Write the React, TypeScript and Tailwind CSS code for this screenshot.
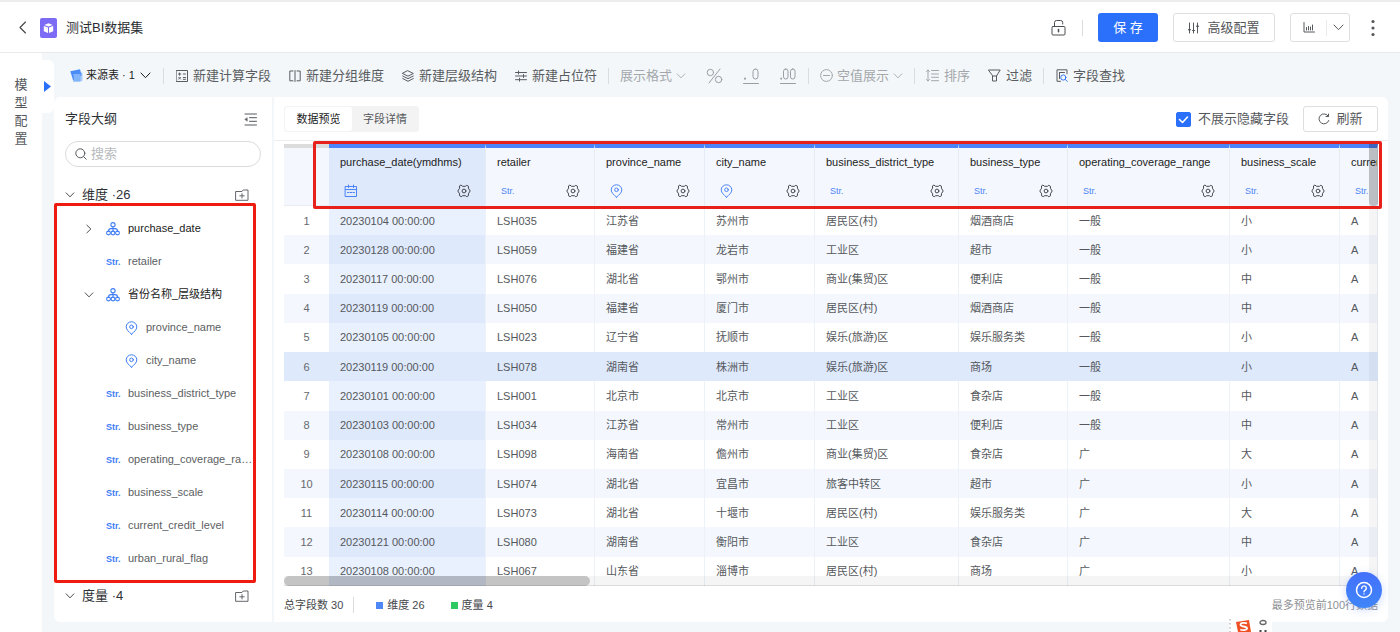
import type { ReactNode } from 'react';

type Kind = 'date' | 'str' | 'geo' | 'tree';

interface Column {
  name: string;
  kind: Kind;
  width: string;
}

interface Field {
  name: string;
  kind: Kind;
  arrow?: 'right' | 'down';
  nested?: boolean;
}

const columns: Column[] = [
  { name: 'purchase_date(ymdhms)', kind: 'date', width: 'w-[157px]' },
  { name: 'retailer', kind: 'str', width: 'w-[109px]' },
  { name: 'province_name', kind: 'geo', width: 'w-[110px]' },
  { name: 'city_name', kind: 'geo', width: 'w-[110px]' },
  { name: 'business_district_type', kind: 'str', width: 'w-[144px]' },
  { name: 'business_type', kind: 'str', width: 'w-[109px]' },
  { name: 'operating_coverage_range', kind: 'str', width: 'w-[162px]' },
  { name: 'business_scale', kind: 'str', width: 'w-[110px]' },
  { name: 'current_credit_level', kind: 'str', width: '' },
];

const rows: string[][] = [
  ['20230104 00:00:00', 'LSH035', '江苏省', '苏州市', '居民区(村)', '烟酒商店', '一般', '小', 'A'],
  ['20230128 00:00:00', 'LSH059', '福建省', '龙岩市', '工业区', '超市', '一般', '小', 'A'],
  ['20230117 00:00:00', 'LSH076', '湖北省', '鄂州市', '商业(集贸)区', '便利店', '一般', '中', 'A'],
  ['20230119 00:00:00', 'LSH050', '福建省', '厦门市', '居民区(村)', '烟酒商店', '一般', '中', 'A'],
  ['20230105 00:00:00', 'LSH023', '辽宁省', '抚顺市', '娱乐(旅游)区', '娱乐服务类', '一般', '小', 'A'],
  ['20230119 00:00:00', 'LSH078', '湖南省', '株洲市', '娱乐(旅游)区', '商场', '一般', '小', 'A'],
  ['20230101 00:00:00', 'LSH001', '北京市', '北京市', '工业区', '食杂店', '一般', '中', 'A'],
  ['20230103 00:00:00', 'LSH034', '江苏省', '常州市', '工业区', '便利店', '一般', '中', 'A'],
  ['20230108 00:00:00', 'LSH098', '海南省', '儋州市', '商业(集贸)区', '食杂店', '广', '大', 'A'],
  ['20230115 00:00:00', 'LSH074', '湖北省', '宜昌市', '旅客中转区', '超市', '广', '小', 'A'],
  ['20230114 00:00:00', 'LSH073', '湖北省', '十堰市', '居民区(村)', '娱乐服务类', '广', '大', 'A'],
  ['20230121 00:00:00', 'LSH080', '湖南省', '衡阳市', '工业区', '食杂店', '广', '中', 'A'],
  ['20230108 00:00:00', 'LSH067', '山东省', '淄博市', '居民区(村)', '商场', '广', '小', 'A'],
];

const fields: Field[] = [
  { name: 'purchase_date', kind: 'tree', arrow: 'right' },
  { name: 'retailer', kind: 'str' },
  { name: '省份名称_层级结构', kind: 'tree', arrow: 'down' },
  { name: 'province_name', kind: 'geo', nested: true },
  { name: 'city_name', kind: 'geo', nested: true },
  { name: 'business_district_type', kind: 'str' },
  { name: 'business_type', kind: 'str' },
  { name: 'operating_coverage_range', kind: 'str' },
  { name: 'business_scale', kind: 'str' },
  { name: 'current_credit_level', kind: 'str' },
  { name: 'urban_rural_flag', kind: 'str' },
];

function Svg({ children, className = 'size-[14px]', box = '0 0 14 14' }: { children: ReactNode; className?: string; box?: string }) {
  return (
    <svg viewBox={box} className={`shrink-0 ${className}`} fill="none" stroke="currentColor" strokeLinecap="round" strokeLinejoin="round" aria-hidden="true">
      {children}
    </svg>
  );
}

function ChevronDown({ className = 'h-[7px] w-[11px]' }: { className?: string }) {
  return (
    <Svg box="0 0 11 7" className={className}>
      <path d="M1 1l4.5 4.7L10 1" />
    </Svg>
  );
}

function KindIcon({ kind, bold = false }: { kind: Kind; bold?: boolean }) {
  if (kind === 'str') {
    return <span className={`w-[14px] shrink-0 text-[9px] leading-4 ${bold ? 'font-bold' : ''}`}>Str.</span>;
  }
  if (kind === 'geo') {
    return (
      <Svg className="h-[14px] w-[13px]" box="0 0 13 14">
        <path d="M6.5 13.2C4 10.9 1.2 8.8 1.2 5.9a5.3 5.1 0 0 1 10.6 0c0 2.9-2.8 5-5.3 7.3z" />
        <circle cx="6.5" cy="5.8" r="1.8" />
      </Svg>
    );
  }
  if (kind === 'date') {
    return (
      <Svg>
        <path d="M1.5 2.5h11v10h-11zM1.5 5.5h11M4.500 1v2.500M9.500 1v2.500" />
        <path d="M3.500 8.500h1.500M6.300 8.500h1.500M9 8.500h1.500" />
      </Svg>
    );
  }
  return (
    <Svg>
      <circle cx="7" cy="2.700" r="2.100" strokeWidth="1.100" />
      <circle cx="2.500" cy="11" r="1.900" strokeWidth="1.100" />
      <circle cx="7" cy="11" r="1.900" strokeWidth="1.100" />
      <circle cx="11.500" cy="11" r="1.900" strokeWidth="1.100" />
      <path d="M7 4.800v4.300M2.500 9.100c0-1.700.9-2.500 2.400-2.500h4.200c1.500 0 2.400.8 2.400 2.500" strokeWidth="1.100" />
    </Svg>
  );
}

function Gear() {
  return (
    <Svg>
      <path d="M4.200 1.300L5.600 2.300h2.800l1.400-1 1.700 1-.1 1.900L13.200 7l-1.800 2.800.1 1.900-1.700 1-1.400-1H5.600l-1.400 1-1.700-1 .1-1.900L.8 7l1.800-2.800-.1-1.900z" />
      <circle cx="7" cy="7" r="1.900" />
    </Svg>
  );
}

function FolderPlus() {
  return (
    <Svg className="h-[12px] w-[14px]" box="0 0 14 12">
      <path d="M1 2.500h6L8.200 1H13v10.300H1zM7 4.600v4.400M4.800 6.800h4.400" />
    </Svg>
  );
}

function Tool({ icon, children, muted = false, className = '' }: { icon?: ReactNode; children?: ReactNode; muted?: boolean; className?: string }) {
  return (
    <button type="button" className={`flex h-6 shrink-0 items-center gap-1 whitespace-nowrap ${muted ? 'text-[#a3a7ab]' : 'text-[#595c60]'} ${className}`}>
      {icon}
      {children}
    </button>
  );
}

function Separator({ className = '' }: { className?: string }) {
  return <span className={`h-4 w-px shrink-0 bg-[#d9dde0] ${className}`} />;
}

function Header() {
  return (
    <header className="flex h-[53px] shrink-0 items-center border-t-2 border-b border-t-[#ededed] border-b-[#e6eaec] bg-white pt-px pr-5 pl-[18px]">
      <button type="button" aria-label="返回" className="text-[#444]">
        <Svg className="h-[13px] w-[9px]" box="0 0 9 13">
          <path d="M7.500 1L2 6.500 7.500 12" strokeWidth="1.100" />
        </Svg>
      </button>
      <svg viewBox="0 0 17 20" className="ml-[13px] h-5 w-[17px]" aria-hidden="true">
        <rect width="17" height="20" rx="2" fill="#7c6cf5" />
        <path d="M8.500 5.200l4.200 1.700-4.200 1.700-4.200-1.700zM3.800 7.900l4.200 1.700v5.500l-4.200-1.800zM13.200 7.900L9 9.600v5.500l4.200-1.800z" fill="#fff" />
      </svg>
      <h1 className="ml-[9px] text-[13px] text-[#2b2d30]">测试BI数据集</h1>
      <div className="ml-auto flex items-center">
        <button type="button" aria-label="锁定" className="text-[#4b4e52]">
          <Svg className="h-[17px] w-[15px]" box="0 0 15 17">
            <rect x="1" y="7.500" width="13" height="8.500" rx="1" />
            <path d="M3.500 7.500V3.500a2 2 0 0 1 2-2h4.200a2 2 0 0 1 2 2V5" />
            <path d="M7.500 10.500v2.300" strokeWidth="1.500" />
          </Svg>
        </button>
        <Separator className="ml-4" />
        <button type="button" className="ml-[15px] h-[29px] w-[60px] rounded-[3px] bg-[#2a70fb] text-[13px] text-white">保 存</button>
        <button type="button" className="ml-[15px] flex h-[29px] w-[102px] items-center justify-center gap-2 rounded-[3px] border border-[#dcdee0] text-[13px] text-[#55585c]">
          <Svg className="h-3 w-[11px]" box="0 0 11 12">
            <path d="M1.500 1v10M5.500 1v10M9.500 1v10M.5 7.500l1 1.500 1-1.500M4.500 8.500h2M8.500 4.500l1-1.500 1 1.500" />
          </Svg>
          高级配置
        </button>
        <div className="ml-[15px] flex h-[29px] w-[60px] items-center rounded-[3px] border border-[#dcdee0] text-[#55585c]">
          <button type="button" aria-label="图表" className="flex flex-1 justify-center">
            <Svg className="h-[11px] w-3" box="0 0 12 11">
              <path d="M1 .5v9.500h10.500M3.500 8V5.500M5.500 8V4.500M7.500 8V5M9.500 8V3" />
            </Svg>
          </button>
          <span className="h-4 w-px bg-[#e8eaec]" />
          <button type="button" aria-label="更多图表" className="flex w-[22px] justify-center"><ChevronDown /></button>
        </div>
        <button type="button" aria-label="更多" className="ml-4 flex w-[14px] justify-center text-[#55585c]">
          <svg viewBox="0 0 4 18" className="h-[18px] w-1" fill="currentColor" aria-hidden="true">
            <circle cx="2" cy="2.500" r="1.600" /><circle cx="2" cy="9" r="1.600" /><circle cx="2" cy="15.500" r="1.600" />
          </svg>
        </button>
      </div>
    </header>
  );
}

function Toolbar() {
  return (
    <div className="flex h-11 shrink-0 items-center overflow-hidden pt-px pl-7 text-[13px]">
      <button type="button" className="flex h-6 shrink-0 items-center text-[11px] text-[#1c1c1c]">
        <svg viewBox="0 0 13 13" className="mr-[3px] size-[13px]" aria-hidden="true">
          <path d="M3 3.500h9.500v8L10 13H3z" fill="#a9cdfb" />
          <path d="M.3 2.300L10 .3l1.600 6L5 11.500 3 11z" fill="#4a8df8" />
          <path d="M3.300 5h7.200v7H4z" fill="#82b4fb" />
        </svg>
        来源表 · 1
        <ChevronDown className="ml-[5px] h-[7px] w-[11px]" />
      </button>
      <Separator className="mx-3" />
      <Tool icon={<Svg className="mr-px size-3" box="0 0 12 12"><rect x=".5" y=".5" width="11" height="11" /><path d="M2.500 4h2.300M3.600 3v2.200M7.300 4h2.200M2.700 7.300l1.800 1.800M4.500 7.300L2.700 9.100M7.300 7.500h2.200M7.300 9.300h2.200" /></Svg>}>新建计算字段</Tool>
      <Tool className="ml-[18px]" icon={<Svg className="mr-px size-3" box="0 0 12 12"><path d="M4 1H.8v9.800H4M8 1h3.200v9.800H8M6 .5v11" /></Svg>}>新建分组维度</Tool>
      <Tool className="ml-[18px]" icon={<Svg className="mr-px size-3" box="0 0 12 12"><path d="M6 .8l5.300 2.700L6 6.200.7 3.500zM.7 6L6 8.700 11.300 6M.7 8.500L6 11.300l5.300-2.800" /></Svg>}>新建层级结构</Tool>
      <Tool className="ml-[18px]" icon={<Svg className="mr-px size-3" box="0 0 12 12"><path d="M.5 2.500h11M.5 6h11M.5 9.700h11M3.500 1v3M8.500 4.500v3M4.500 8.200v3" /></Svg>}>新建占位符</Tool>
      <Separator className="mx-[11px]" />
      <Tool muted>展示格式<ChevronDown className="h-[6px] w-[10px]" /></Tool>
      <button type="button" aria-label="百分比" className="ml-5 shrink-0 text-[#9a9ea2]">
        <Svg className="h-4 w-[17px]" box="0 0 17 16"><circle cx="4.400" cy="4.500" r="3.200" /><circle cx="12.600" cy="11.500" r="3.200" /><path d="M14 1L3 15" /></Svg>
      </button>
      <button type="button" aria-label="减少小数位" className="ml-5 shrink-0 text-[#9a9ea2]">
        <Svg className="h-4 w-4" box="0 0 16 16"><path d="M.5 15.500h15" /><rect x="10" y="1" width="5" height="10" rx="2.500" /><path d="M2 10.500v.3" strokeWidth="2" /></Svg>
      </button>
      <button type="button" aria-label="增加小数位" className="ml-[21px] shrink-0 text-[#9a9ea2]">
        <Svg className="h-4 w-4" box="0 0 16 16"><path d="M.5 15.500h15" /><rect x="3.500" y="1" width="4.500" height="10" rx="2.200" /><rect x="10.500" y="1" width="4.500" height="10" rx="2.200" /><path d="M1.200 10.500v.3" strokeWidth="1.800" /></Svg>
      </button>
      <Separator className="mr-[11px] ml-3" />
      <Tool muted icon={<Svg className="size-[13px]" box="0 0 13 13"><circle cx="6.500" cy="6.500" r="5.900" /><path d="M3.500 6.500h6" /></Svg>}>空值展示<ChevronDown className="h-[6px] w-[10px]" /></Tool>
      <Separator className="mx-[11px]" />
      <Tool muted icon={<Svg className="mr-px size-[13px]" box="0 0 13 13"><path d="M2 1v11M.5 2.500L2 1l1.500 1.500M.5 10.500L2 12l1.500-1.500M5.500 1.500h7M5.500 5h7M5.500 8.300h7M5.500 11.700h7" /></Svg>}>排序</Tool>
      <Tool className="ml-[18px]" icon={<Svg className="mr-px size-[13px]" box="0 0 13 13"><path d="M.8 1h11.400L8.500 7v5h-4V7zM4.500 7h4" /></Svg>}>过滤</Tool>
      <Separator className="mr-3 ml-[11px]" />
      <Tool icon={<Svg className="mr-px h-[13px] w-3" box="0 0 12 13"><path d="M4.500 12.300H1V.8h10v4M3.500 3.500h5M3.500 3.500v6" /><g stroke="#3478f6"><circle cx="7.300" cy="8.500" r="2.600" /><path d="M9.300 10.500l2 2" /></g></Svg>}>字段查找</Tool>
    </div>
  );
}

function SectionTitle({ label, count }: { label: string; count: string }) {
  return (
    <div className="flex h-[34px] items-center pr-[23px] pl-[11px] text-[13px] text-[#2e3135]">
      <ChevronDown className="h-[6px] w-[10px]" />
      <span className="ml-[7px]">{label} ·{count}</span>
      <button type="button" aria-label={`新建${label}文件夹`} className="ml-auto text-[#63666a]"><FolderPlus /></button>
    </div>
  );
}

function Sidebar() {
  return (
    <aside className="w-[218px] shrink-0 overflow-hidden rounded-l-md bg-white">
      <div className="flex h-11 items-center justify-between pr-[15px] pl-[11px]">
        <h2 className="text-[13px] text-[#2e3135]">字段大纲</h2>
        <button type="button" aria-label="收起" className="text-[#55585c]">
          <Svg className="size-[13px]" box="0 0 13 13"><path d="M1 1h11.500M5.500 4.700h7M5.500 8.300h7M1 12h11.500" /><path d="M3.300 4.700v3.600L.8 6.500z" fill="currentColor" strokeWidth=".3" /></Svg>
        </button>
      </div>
      <label className="mr-[11px] ml-[11px] flex h-[26px] items-center gap-1 rounded-full border border-[#d9dbdd] px-[9px] text-[#55585c]">
        <Svg className="size-3" box="0 0 12 12"><circle cx="5.300" cy="5.300" r="4.500" /><path d="M8.700 8.700l2.500 2.500" /></Svg>
        <input type="text" aria-label="搜索" placeholder="搜索" className="w-full bg-transparent text-[13px] outline-none placeholder:text-[#b8babd]" />
      </label>
      <div className="mt-[11px]"><SectionTitle label="维度" count="26" /></div>
      <ul className="relative pb-1">
        {fields.map((f) => (
          <li key={f.name} className={`flex h-[33px] items-center text-[11px] ${f.nested ? 'pl-[71px]' : f.arrow ? 'pl-[30px]' : 'pl-[52px]'}`}>
            {f.arrow && (
              <button type="button" aria-label="展开或收起" className="mr-3 flex w-[10px] justify-center text-[#333]">
                <ChevronDown className={f.arrow === 'right' ? 'h-[6px] w-[10px] -rotate-90' : 'h-[6px] w-[10px]'} />
              </button>
            )}
            <span className="flex text-[#3f7df6]"><KindIcon kind={f.kind} bold /></span>
            <span className={`mr-[19px] ml-2 truncate ${f.arrow ? 'text-[#222]' : 'text-[#5b5e62]'}`}>{f.name}</span>
          </li>
        ))}
        <li aria-hidden="true" className="pointer-events-none absolute -top-[9px] right-4 -bottom-1 left-0 z-10 rounded-[2px] border-[3px] border-[#ee1c10]" />
      </ul>
      <SectionTitle label="度量" count="4" />
    </aside>
  );
}

function cellColor(row: number, col: number) {
  if (row === 5) return 'bg-[#dee9fc]';
  if (col === 0) return row % 2 ? 'bg-[#dfe9fc]' : 'bg-[#e9f1fe]';
  return row % 2 ? 'bg-[#f4f8fe]' : 'bg-white';
}

function DataTable() {
  return (
    <div className="relative mr-[10px] ml-[10px] min-h-0 flex-1">
      <div className="h-full overflow-hidden">
        <table className="h-full w-full table-fixed border-separate border-spacing-0 text-left text-[11px] leading-4">
          <colgroup>
            <col className="w-[45px]" />
            {columns.map((c) => <col key={c.name} className={c.width} />)}
          </colgroup>
          <thead>
            <tr className="h-[62px]">
              <th aria-label="行号" className="border-t-4 border-b border-t-[#dcdcdc] border-b-[#e9edf3] bg-[#f4f8fe]" />
              {columns.map((c, i) => (
                <th key={c.name} scope="col" className={`overflow-hidden border-t-4 border-r border-t-[#4c84fb] border-r-[#e6ecf6] p-0 align-top font-normal ${i === 0 ? 'bg-[#dee9fc]' : 'bg-[#f4f8fe]'}`}>
                  <div className="flex flex-col gap-[9px] pt-1 pb-[5px]">
                    <div className="h-5 pl-[11px] leading-5 whitespace-nowrap text-[#222]">{c.name}</div>
                    <div className="flex h-5 items-center justify-between pr-[14px] pl-[15px]">
                      <span className="flex text-[#4c84f6]"><KindIcon kind={c.kind} /></span>
                      {i < 8 && <button type="button" aria-label={`${c.name} 设置`} className="text-[#45484c]"><Gear /></button>}
                    </div>
                  </div>
                </th>
              ))}
            </tr>
          </thead>
          <tbody>
            {rows.map((r, ri) => (
              <tr key={ri}>
                <td className={`p-0 text-center text-[#66696d] ${ri === 5 ? 'bg-[#dee9fc]' : ri % 2 ? 'bg-[#f4f8fe]' : 'bg-white'}`}>{ri + 1}</td>
                {r.map((v, ci) => (
                  <td key={ci} className={`truncate border-r p-0 pl-[11px] text-[#55585c] ${ri === 5 ? 'border-[#dee9fc]' : 'border-[#edf1f8]'} ${cellColor(ri, ci)}`}>{v}</td>
                ))}
              </tr>
            ))}
          </tbody>
        </table>
      </div>
      <div className="absolute top-0 right-0 bottom-0 w-[9px] bg-black/4"><div className="h-[62px] rounded-b bg-black/20" /></div>
      <div className="absolute right-0 bottom-0 left-0 h-[10px] border-b border-black/10 bg-black/4"><div className="h-[10px] w-[28%] rounded-full bg-black/20" /></div>
      <div aria-hidden="true" className="pointer-events-none absolute -top-[3px] -right-1 left-[29px] z-10 h-[68px] rounded-[2px] border-[3px] border-[#e8201a]" />
    </div>
  );
}

function Preview() {
  return (
    <section className="flex min-w-0 flex-1 flex-col rounded-r-md bg-white">
      <div className="flex h-11 shrink-0 items-center justify-between border-b border-[#eceeef] pt-px pr-[10px] pl-[10px]">
        <div role="tablist" className="flex h-[26px] rounded-[3px] border border-[#f3f3f3] bg-[#f3f3f3] text-[11px] text-[#55585c]">
          <button type="button" role="tab" aria-selected="true" className="w-[67px] rounded-[3px] bg-white text-[#222]">数据预览</button>
          <button type="button" role="tab" aria-selected="false" className="w-[66px]">字段详情</button>
        </div>
        <div className="flex items-center text-[13px] text-[#55585c]">
          <label className="flex items-center gap-[7px]">
            <span className="relative flex size-[15px]">
              <input type="checkbox" defaultChecked className="peer size-[15px] appearance-none rounded-[2px] border border-[#2a70fb] checked:bg-[#2a70fb]" />
              <Svg className="pointer-events-none absolute inset-0 size-[15px] text-white opacity-0 peer-checked:opacity-100" box="0 0 15 15">
                <path d="M3.500 7.500l3 3 5-5.500" strokeWidth="1.600" />
              </Svg>
            </span>
            不展示隐藏字段
          </label>
          <button type="button" className="ml-[14px] flex h-[26px] w-[75px] items-center justify-center gap-[6px] rounded-[3px] border border-[#dcdee0]">
            <Svg className="size-3" box="0 0 12 12"><path d="M10.800 7.500A5 5 0 1 1 10.300 3.200M10.500 1v2.500H8" /></Svg>
            刷新
          </button>
        </div>
      </div>
      <div className="h-[3px] shrink-0" />
      <DataTable />
      <footer className="flex h-9 shrink-0 items-center px-[10px] pt-[2px] text-[11px] text-[#45484c]">
        <span>总字段数 30</span>
        <Separator className="mr-[22px] ml-[10px]" />
        <span className="mr-1 size-[7px] bg-[#4f87f7]" />
        <span>维度 26</span>
        <span className="mr-1 ml-[26px] size-[7px] bg-[#2fc963]" />
        <span>度量 4</span>
        <span className="ml-auto text-[#8e9195]">最多预览前100行数据</span>
      </footer>
    </section>
  );
}

export default function App() {
  return (
    <div className="relative flex h-screen flex-col overflow-hidden bg-white font-['Liberation_Sans','Noto_Sans_CJK_SC',sans-serif]">
      <Header />
      <main className="flex min-h-0 flex-1">
        <nav className="flex w-[42px] shrink-0 justify-center pt-[23px]">
          <a href="#model" className="w-[13px] text-[13px] leading-[18px] text-[#55585c]">模型配置</a>
        </nav>
        <div className="relative flex min-w-0 flex-1 flex-col bg-[#f3f7fa]">
          <button type="button" aria-label="展开模型配置" className="absolute top-[7px] left-0 flex h-[53px] w-3 items-center rounded-r-md bg-white pl-[2px]">
            <svg viewBox="0 0 7 11" className="h-[11px] w-[7px]" aria-hidden="true"><path d="M0 0l7 5.500L0 11z" fill="#2a70fb" /></svg>
          </button>
          <Toolbar />
          <div className="flex min-h-0 flex-1 gap-[2px] pr-3 pb-[10px] pl-3">
            <Sidebar />
            <Preview />
          </div>
        </div>
      </main>
      <button type="button" aria-label="帮助" className="absolute right-[18px] bottom-6 z-20 flex size-9 items-center justify-center rounded-full bg-linear-to-b from-[#4470fb] to-[#3f86f8] text-white shadow-[0_2px_8px_rgba(60,110,250,0.25)]">
        <Svg className="size-[18px]" box="0 0 18 18">
          <circle cx="9" cy="9" r="7.500" strokeWidth="1.500" />
          <path d="M6.700 7.200a2.300 2.300 0 1 1 3.600 1.900c-.8.5-1.300.9-1.300 1.600M9 12.900v.2" strokeWidth="1.400" />
        </Svg>
      </button>
      <div className="absolute right-[128px] bottom-0 h-[14px] w-[43px] bg-white">
        <svg viewBox="0 0 43 14" className="h-[14px] w-[43px]" aria-hidden="true">
          <path d="M1 1v13" stroke="#999" strokeDasharray="1.500 2.500" />
          <path d="M7 4l13-2 2 12H9z" fill="#f04e23" />
          <path d="M18 5.500c-2-1-6.500-.8-6.500 1.200 0 2.300 6.500 1.300 6.500 3.600 0 2-4.500 2.300-6.700 1.200" fill="none" stroke="#fff" strokeWidth="1.800" />
          <ellipse cx="34" cy="4.500" rx="3" ry="2" fill="none" stroke="#666" strokeWidth="1.300" />
          <path d="M31.500 12v2M36.500 12v2" stroke="#444" strokeWidth="2" />
        </svg>
      </div>
    </div>
  );
}
